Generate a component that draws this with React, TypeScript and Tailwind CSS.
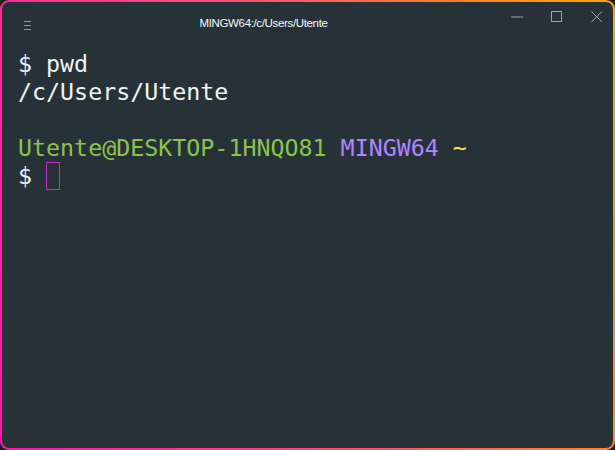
import React from 'react';

const mono = { fontFamily: '"DejaVu Sans Mono", monospace' };

export default function App() {
  return (
    <div className="w-[615px] h-[450px] bg-[#1b1b1b]">
      <div className="w-full h-full rounded-[9px] p-[2px] bg-[linear-gradient(72deg,#ff14ae_0%,#ff4f70_50%,#ffa600_100%)]">
        <div className="w-full h-full rounded-[7px] bg-[#263238] flex flex-col overflow-hidden">
          {/* title bar */}
          <div className="h-[44px] flex items-center shrink-0">
            <div className="w-[46px] flex justify-center pl-[6px] pt-[2px]">
              <svg width="8" height="10" viewBox="0 0 8 10">
                <path d="M0 1.5h7M0 5.5h7M0 9.5h7" stroke="#8c979c" strokeWidth="1" />
              </svg>
            </div>
            <div className="flex-1 text-center text-[11.5px] text-[#f4fbff] font-['Liberation_Sans',sans-serif] tracking-[-0.35px]">
              MINGW64:/c/Users/Utente
            </div>
            <div className="w-[138px] flex justify-end self-start h-[30px] items-center mr-[-4px]">
              <div className="w-[40px] flex justify-center">
                <svg width="12" height="2" viewBox="0 0 12 2">
                  <path d="M0 1h12" stroke="#9aa3a7" strokeWidth="1" />
                </svg>
              </div>
              <div className="w-[40px] flex justify-center">
                <svg width="12" height="12" viewBox="0 0 12 12">
                  <rect x="0.5" y="0.5" width="10" height="10" fill="none" stroke="#9aa3a7" strokeWidth="1" />
                </svg>
              </div>
              <div className="w-[40px] flex justify-center">
                <svg width="12" height="12" viewBox="0 0 12 12">
                  <path d="M0.5 0.5L11 11M11 0.5L0.5 11" stroke="#9aa3a7" strokeWidth="1" />
                </svg>
              </div>
            </div>
          </div>
          {/* terminal */}
          <div className="pl-[16px] pt-[4px] text-[23.3px] leading-[28px] text-[#eef4f4] whitespace-pre" style={mono}>
            <div>$ pwd</div>
            <div>/c/Users/Utente</div>
            <div>&nbsp;</div>
            <div>
              <span className="text-[#8bc34a]">Utente@DESKTOP-1HNQO81 </span>
              <span className="text-[#b184ff]">MINGW64 </span>
              <span className="text-[#ffe34f]">~</span>
            </div>
            <div className="flex items-center">
              <span>$ </span>
              <span className="inline-block w-[14px] h-[28px] border border-[#c32fc3]" />
            </div>
          </div>
        </div>
      </div>
    </div>
  );
}
